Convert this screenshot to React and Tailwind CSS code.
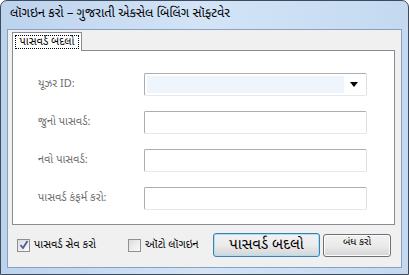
import React from "react";

const Field = ({ label, combo }) => (
  <div className="flex items-center h-[38px]">
    <div className="w-[106px] text-[11px] text-[#6d6d6d]">{label}</div>
    {combo ? (
      <div className="w-[223px] h-[23px] border border-[#abadb3] border-b-[#e3e9ef] border-r-[#dbdfe6] rounded-[2px] bg-white flex items-center p-[2px]">
        <div className="flex-1 h-full bg-[#eef5fd]" />
        <div className="w-[20px] flex justify-center">
          <svg width="8" height="5" viewBox="0 0 8 5">
            <path d="M0 0h8L4 5z" fill="#000" />
          </svg>
        </div>
      </div>
    ) : (
      <div className="w-[223px] h-[23px] border border-[#abadb3] border-b-[#e3e9ef] border-r-[#dbdfe6] rounded-[2px] bg-white" />
    )}
  </div>
);

const Check = ({ checked, label }) => (
  <div className="flex items-center gap-[4px]">
    <div className="w-[13px] h-[13px] border border-[#8e8f8f] bg-gradient-to-br from-[#dcdcdc] to-[#fbfbfb] flex items-center justify-center">
      {checked && (
        <svg width="10" height="10" viewBox="0 0 10 10">
          <path d="M1.5 5l2.5 3 4.5-7" stroke="#4a5f97" strokeWidth="1.8" fill="none" />
        </svg>
      )}
    </div>
    <span className="text-[11px] text-black">{label}</span>
  </div>
);

export default function App() {
  return (
    <div
      className="w-[409px] h-[275px] bg-white"
      style={{ fontFamily: "'Noto Sans Gujarati', 'Noto Sans', 'DejaVu Sans', sans-serif" }}
    >
      <div className="w-[409px] h-[275px] border border-[#3f4b5a] rounded-t-[7px] bg-gradient-to-r from-[#bcd3ee] via-[#d3e4f7] to-[#c4d9f0] flex flex-col px-[6px] pb-[6px]">
        <div className="h-[28px] flex items-center pl-[3px] text-[12.7px] text-black">
          લૉગઇન કરો – ગુજરાતી એક્સેલ બિલિંગ સૉફ્ટવેર
        </div>
        <div className="flex-1 border border-[#8ba0bc] bg-[#f0f0f0] flex flex-col px-[4px] pt-[2px]">
          <div className="flex">
            <div className="w-[70px] h-[19px] bg-white border border-[#898c95] border-b-0 p-[2px] relative z-10">
              <div className="h-full border border-dotted border-black flex items-center justify-center text-[11px] leading-none">
                પાસવર્ડ બદલો
              </div>
            </div>
          </div>
          <div className="w-[383px] h-[175px] -mt-px bg-white border border-[#898c95] pl-[25px] pt-[14px]">
            <Field label="યૂઝર ID:" combo />
            <Field label="જુનો પાસવર્ડ:" />
            <Field label="નવો પાસવર્ડ:" />
            <Field label="પાસવર્ડ કંફર્મ કરો:" />
          </div>
          <div className="flex items-center h-[40px] pl-[5px]">
            <div className="w-[111px]">
              <Check checked label="પાસવર્ડ સેવ કરો" />
            </div>
            <div className="w-[85px]">
              <Check label="ઑટો લૉગઇન" />
            </div>
            <button className="w-[107px] h-[24px] rounded-[3px] border border-[#3c7fb1] shadow-[inset_0_0_0_1px_#a6e1f6] bg-gradient-to-b from-[#f2f2f2] via-[#ebebeb] to-[#d5d5d5] text-[15px] text-black leading-none">
              પાસવર્ડ બદલો
            </button>
            <button className="ml-[3px] w-[68px] h-[23px] rounded-[3px] border border-[#707070] shadow-[inset_0_0_0_1px_#fcfcfc] bg-gradient-to-b from-[#f2f2f2] via-[#ebebeb] to-[#d5d5d5] text-[10px] text-black leading-none pb-[4px]">
              બંધ કરો
            </button>
          </div>
        </div>
      </div>
    </div>
  );
}
